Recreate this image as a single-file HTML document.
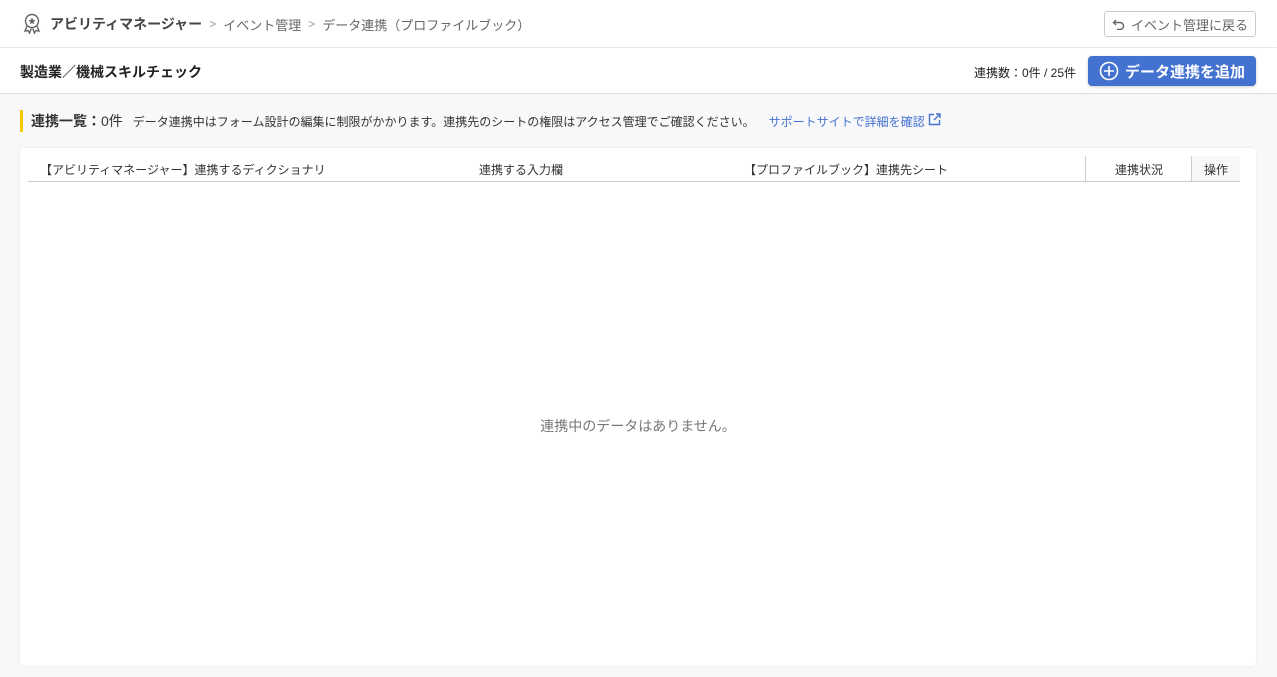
<!DOCTYPE html>
<html><head><meta charset="utf-8"><style>
*{box-sizing:border-box;margin:0;padding:0}
body{width:1277px;height:677px;overflow:hidden;background:#f8f8fa;font-family:"Liberation Sans","Noto Sans CJK JP",sans-serif;color:#333;position:relative}
.top{position:absolute;left:0;top:0;width:1277px;height:47px;background:#fff;box-shadow:0 1px 3px rgba(0,0,0,.1)}
.bc{position:absolute;left:22px;top:13px;font-size:13px;color:#666;display:flex;align-items:center;white-space:nowrap}
.bc b{font-size:14px;color:#444;margin-left:8px}
.sep{margin:0 7px;color:#999;font-size:12px}
.back{position:absolute;left:1104px;top:11px;width:152px;height:26px;border:1px solid #ccc;border-radius:3px;font-size:13px;color:#666;display:flex;align-items:center;justify-content:center;gap:5px}
.bar{position:absolute;left:0;top:48px;width:1277px;height:46px;background:#fff;border-bottom:1px solid #ddd}
.title{position:absolute;left:20px;top:14px;font-size:14px;font-weight:bold;color:#222}
.cnt{position:absolute;left:974px;top:16px;font-size:12px;color:#222}
.add{position:absolute;left:1088px;top:8px;width:168px;height:30px;background:#4472d0;border-radius:4px;color:#fff;font-size:15px;font-weight:bold;display:flex;align-items:center;justify-content:center;gap:6px;box-shadow:0 1px 3px rgba(0,0,0,.2)}
.info{position:absolute;left:20px;top:110px;height:22px;border-left:3px solid #f5c800;padding-left:8px;font-size:12px;display:flex;align-items:center;white-space:nowrap}
.info b{font-size:14px;margin-right:10px}
.info a{color:#4472d0;margin-left:14px;text-decoration:none}
.card{position:absolute;left:20px;top:148px;width:1236px;height:518px;background:#fff;border-radius:4px;box-shadow:0 0 2px rgba(0,0,0,.08)}
.th{position:absolute;left:8px;top:8px;width:1212px;height:26px;border-bottom:1px solid #ccc;font-size:12px;color:#333}
.th span{position:absolute;top:5px}
.empty{position:absolute;left:0;width:100%;top:268px;text-align:center;font-size:14px;color:#777}
</style></head><body>
<div class="top">
<div class="bc"><svg width="20" height="22" viewBox="0 0 20 22" fill="none" stroke="#666" stroke-width="1.4"><circle cx="10" cy="8" r="6.5"/><path d="M10 4.5l1.1 2.3 2.4.3-1.8 1.6.5 2.4L10 10l-2.2 1.1.5-2.4-1.8-1.6 2.4-.3z" fill="#666" stroke="none"/><path d="M5 13l-2 5 3-.5 1.5 2.5 1.8-4.5M15 13l2 5-3-.5-1.5 2.5-1.8-4.5"/></svg><b>アビリティマネージャー</b><span class="sep">&gt;</span>イベント管理<span class="sep">&gt;</span>データ連携（プロファイルブック）</div>
<div class="back"><svg width="14" height="12" viewBox="0 0 14 12" fill="none" stroke="#666" stroke-width="1.4"><path d="M4 2L1.5 4.5 4 7M1.5 4.5H8a3.5 3.5 0 010 7H5"/></svg>イベント管理に戻る</div>
</div>
<div class="bar">
<div class="title">製造業／機械スキルチェック</div>
<div class="cnt">連携数：0件 / 25件</div>
<div class="add"><svg width="20" height="20" viewBox="0 0 20 20" fill="none" stroke="#fff" stroke-width="1.6"><circle cx="10" cy="10" r="8.5"/><path d="M10 5v10M5 10h10"/></svg>データ連携を追加</div>
</div>
<div class="info"><b>連携一覧：<span style="font-weight:normal">0件</span></b>データ連携中はフォーム設計の編集に制限がかかります。連携先のシートの権限はアクセス管理でご確認ください。<a>サポートサイトで詳細を確認 <svg width="13" height="13" viewBox="0 0 13 13" fill="none" stroke="#4472d0" stroke-width="1.4"><path d="M6 1.5H1.5v10h10V7M8 1h4v4M12 1L6 7"/></svg></a></div>
<div class="card">
<div class="th">
<span style="left:12px">【アビリティマネージャー】連携するディクショナリ</span>
<span style="left:451px">連携する入力欄</span>
<span style="left:716px">【プロファイルブック】連携先シート</span>
<div style="position:absolute;left:1057px;top:0;width:155px;height:25px;border-left:1px solid #ccc"></div>
<span style="left:1087px">連携状況</span>
<div style="position:absolute;left:1163px;top:0;width:49px;height:25px;border-left:1px solid #ccc;background:#f8f8f8"></div>
<span style="left:1176px">操作</span>
</div>
<div class="empty">連携中のデータはありません。</div>
</div>
</body></html>
